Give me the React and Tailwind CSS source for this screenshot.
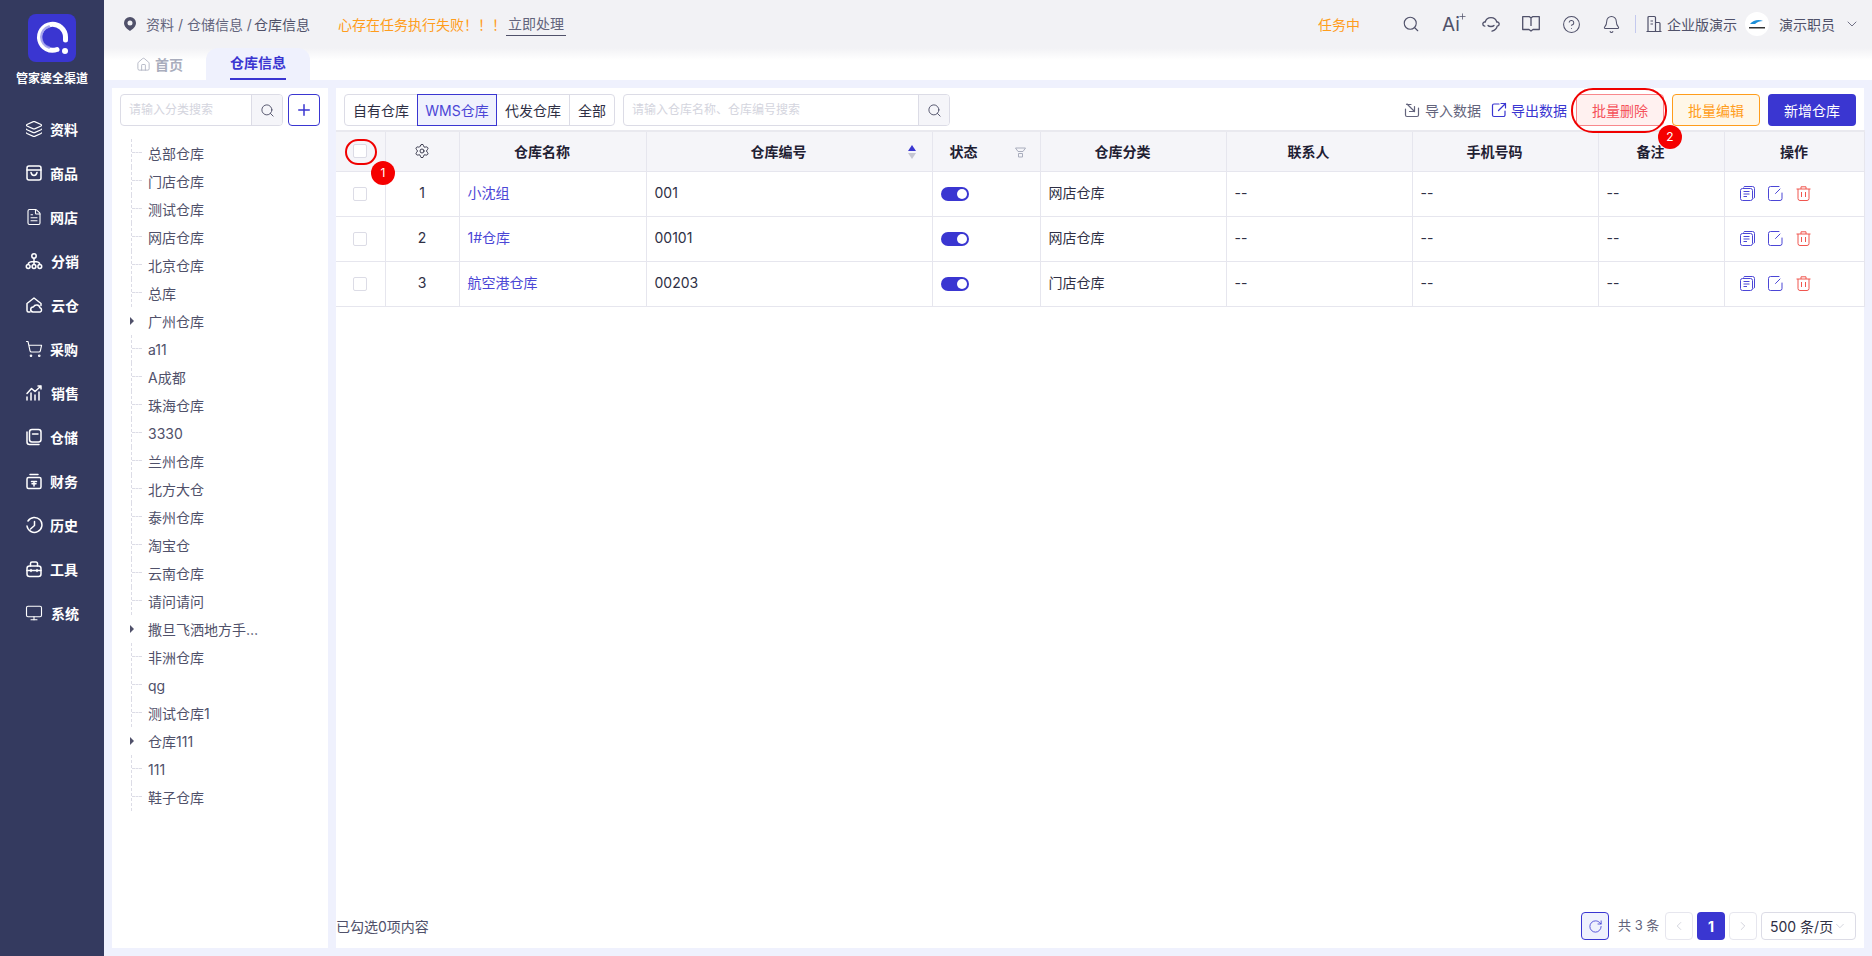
import React from "react";
import { Layers, FileText, ShoppingCart, Search, CircleHelp, Bell, ChevronDown, ChevronLeft, ChevronRight, Settings, RotateCw, Plus, Home, Monitor } from "lucide-react";

const S = (p) => ({ width: 18, height: 18, viewBox: "0 0 18 18", fill: "none", stroke: "currentColor", strokeWidth: 1.5, strokeLinecap: "round", strokeLinejoin: "round", ...p });

const BagI = () => (<svg {...S()}><rect x="2" y="2" width="14" height="14" rx="2" /><path d="M2 6h14M6 8.500c.5 2 1.600 3 3 3s2.500-1 3-3" /></svg>);
const NetI = () => (<svg {...S()}><circle cx="9" cy="4" r="2.200" /><circle cx="3.200" cy="14.500" r="1.900" /><circle cx="9" cy="14.500" r="1.900" /><circle cx="14.800" cy="14.500" r="1.900" /><path d="M9 6.200v6.300M3.200 12.500c0-2.500 2-3 5.800-3s5.800.5 5.800 3" /></svg>);
const CloudI = () => (<svg {...S()}><path d="M5 16H3.500A1.500 1.500 0 0 1 2 14.500V7.500L9 2l7 5.500v2" /><path d="M8 16a2.500 2.500 0 0 1 .4-5 3.500 3.500 0 0 1 6.600.8A2.200 2.200 0 0 1 15 16z" /></svg>);
const ChartI = () => (<svg {...S()}><path d="M2 9.500 6.500 4.500l3.500 3L16 2M13 2h3v3M2 16v-3M6 16V9M10 16v-5M14 16V8" /></svg>);
const StoreI = () => (<svg {...S()}><path d="M2 4v10a2.500 2.500 0 0 0 2.500 2.500H14" /><rect x="4.500" y="1.500" width="11.500" height="12.500" rx="2.500" /><path d="M7.500 6h5.500" /></svg>);
const MoneyI = () => (<svg {...S()}><path d="M5 2.500h8M3.500 5.500h11A1.500 1.500 0 0 1 16 7v8a1.500 1.500 0 0 1-1.500 1.500h-11A1.500 1.500 0 0 1 2 15V7a1.500 1.500 0 0 1 1.500-1.500zM6.500 9.500h5M9 9.500V14M7 11.800h4" /></svg>);
const HistI = () => (<svg {...S()}><path d="M3 5a7.500 7.500 0 1 1-1 5" /><path d="M9.500 5.500v4l-4 3.500" /></svg>);
const ToolI = () => (<svg {...S()}><rect x="2" y="6" width="14" height="10.500" rx="2.500" /><path d="M5.500 6V3.500a1.500 1.500 0 0 1 1.500-1.500h4a1.500 1.500 0 0 1 1.500 1.500V6M2 10.500h14M6 9.500v2M12 9.500v2" /></svg>);
const HeadI = () => (<svg width="18" height="17" viewBox="0 0 18 17" fill="none" stroke="currentColor" strokeWidth="1.300" strokeLinecap="round"><path d="M3.200 6A6 6 0 0 1 14.800 6" /><path d="M3 5.800c-1.500.2-2.200 1.200-2.200 2.200s.7 2 2 2.200M15 5.800c1.500.2 2.200 1.200 2.200 2.200s-.7 2-2 2.200c-.5 2.500-2.500 4.300-5.200 5" /><path d="M6 9.500c1 1.300 4.800 1.300 6 0" /></svg>);
const BookI = () => (<svg width="18" height="16" viewBox="0 0 18 16" fill="none" stroke="currentColor" strokeWidth="1.300" strokeLinejoin="round"><path d="M.7.700h6.800L9 2 10.500.7h6.800V13.500h-6.300L9 15l-2-1.500H.7zM9 2v8" /></svg>);
const BuildI = () => (<svg width="16" height="18" viewBox="0 0 16 18" fill="none" stroke="currentColor" strokeWidth="1.200"><path d="M.5 16.500h15M2 16.500V2.500a1 1 0 0 1 1-1h5.500a1 1 0 0 1 1 1v14M9.500 7.500h3.500a1 1 0 0 1 1 1v8M4.500 6h2.500M4.500 9h2.500" /></svg>);
const ImportI = () => (<svg width="16" height="16" viewBox="0 0 16 16" fill="none" stroke="#63647c" strokeWidth="1.200" strokeLinecap="round" strokeLinejoin="round"><path d="M7 2.500H2.500M1.500 7v6a1.500 1.500 0 0 0 1.500 1.500h10a1.500 1.500 0 0 0 1.500-1.500V6M3 2l7.500 7.500M10.500 4.500v5h-5" /></svg>);
const ExportI = () => (<svg width="16" height="16" viewBox="0 0 16 16" fill="none" stroke="#3a36d1" strokeWidth="1.200" strokeLinecap="round" strokeLinejoin="round"><path d="M8 2H3a1.500 1.500 0 0 0-1.500 1.500V13A1.500 1.500 0 0 0 3 14.500h9.500A1.500 1.500 0 0 0 14 13V9M7.500 8.500 14.500 1.500M10 1.500h4.500V6" /></svg>);
const PinI = () => (<svg width="12" height="14" viewBox="0 0 12 14"><path fillRule="evenodd" fill="#50516a" d="M6 0a6 6 0 0 1 6 6c0 3.400-3.500 6.500-6 8-2.500-1.500-6-4.600-6-8a6 6 0 0 1 6-6zm0 3.500a2.500 2.500 0 1 0 0 5 2.500 2.500 0 0 0 0-5z" /></svg>);
const FilterI = () => (<svg width="11" height="11" viewBox="0 0 11 11" fill="none" stroke="#a9adbd" strokeWidth="1"><path d="M.5 1h10L8 4.500H3zM3 4.500h5M3.500 6.500h4V10h-4z" /></svg>);
const ACopy = () => (<svg width="15" height="15" viewBox="0 0 15 15" fill="none" stroke="#4b46d6" strokeWidth="1"><path d="M3.500 1.500a1.500 1.500 0 0 1 1.500-1h7.500a2 2 0 0 1 2 2V11a1.500 1.500 0 0 1-1 1.500" /><rect x=".5" y="2.500" width="12" height="12" rx="2" /><path d="M3.500 5.500h6M3.500 8h6M3.500 10.500h3.500" /></svg>);
const AEdit = () => (<svg width="15" height="15" viewBox="0 0 15 15" fill="none" stroke="#4b46d6" strokeWidth="1" strokeLinecap="round"><path d="M14 7v5.500a2 2 0 0 1-2 2H2.500a2 2 0 0 1-2-2V2.500a2 2 0 0 1 2-2H11M7.500 7.500 12 3" /></svg>);
const ADel = () => (<svg width="15" height="15" viewBox="0 0 15 15" fill="none" stroke="#f0564f" strokeWidth="1"><path d="M.5 3h14M5 3V.8h5V3M2 3v9.500a2 2 0 0 0 2 2h7a2 2 0 0 0 2-2V3M5.500 6v5M9.500 6v5" /></svg>);

const nav = [
  ["资料", <Layers size={18} strokeWidth={1.5} />, "gap-[7px]"], ["商品", <BagI />, "gap-[7px]"], ["网店", <FileText size={18} strokeWidth={1.5} />, "gap-[7px]"],
  ["分销", <NetI />, "gap-[8px]"], ["云仓", <CloudI />, "gap-[8px]"], ["采购", <ShoppingCart size={18} strokeWidth={1.5} />, "gap-[7px]"], ["销售", <ChartI />, "gap-[8px]"],
  ["仓储", <StoreI />, "gap-[7px]"], ["财务", <MoneyI />, "gap-[7px]"], ["历史", <HistI />, "gap-[7px]"], ["工具", <ToolI />, "gap-[7px]"], ["系统", <Monitor size={18} strokeWidth={1.5} />, "gap-[8px]"],
];
const tree = [
  ["总部仓库"], ["门店仓库"], ["测试仓库"], ["网店仓库"], ["北京仓库"], ["总库"], ["广州仓库", 1], ["a11"], ["A成都"], ["珠海仓库"], ["3330"], ["兰州仓库"],
  ["北方大仓"], ["泰州仓库"], ["淘宝仓"], ["云南仓库"], ["请问请问"], ["撒旦飞洒地方手…", 1], ["非洲仓库"], ["qg"], ["测试仓库1"], ["仓库111", 1], ["111"], ["鞋子仓库"],
];
const rows = [
  ["1", "小沈组", "001", "网店仓库"],
  ["2", "1#仓库", "00101", "网店仓库"],
  ["3", "航空港仓库", "00203", "门店仓库"],
];
const widths = [49, 74, 187, 286, 108, 186, 186, 186, 126, 140];
const th = "border-r border-b border-[#e6e6ee] font-bold text-[#1f2033] text-center p-0 h-[40px]";
const thOff = th + " !pr-[21px]";
const td = "border-r border-b border-[#e6e6ee] p-0 px-2 h-[45px] font-normal text-[#2f3045]";
const tdT = td + " pb-[2px]";

export default function App() {
  return (
    <div className="flex h-screen w-full overflow-hidden text-[14px] text-[#50516a]" style={{ fontFamily: 'Inter, "Noto Sans CJK SC", sans-serif' }}>
      <aside className="w-[104px] shrink-0 bg-[#343a5f] flex flex-col items-center text-white">
        <div className="mt-[14px] w-[48px] h-[48px] rounded-[8px] bg-[#3a36d1]">
          <svg width="48" height="48" viewBox="0 0 48 48" fill="none">
            <path d="M37.500 26V23A13 13 0 1 0 29 35.500" stroke="#ffffff" strokeWidth="5" strokeLinecap="round" />
            <path d="M21 12.500A11 11 0 0 0 21 33.500" stroke="#9492ea" strokeWidth="2.500" strokeLinecap="round" opacity="0.800" />
            <circle cx="37" cy="37" r="3" fill="#fff" />
          </svg>
        </div>
        <div className="mt-[9px] text-[12px] leading-[16px] font-bold whitespace-nowrap">管家婆全渠道</div>
        <nav className="mt-[20px] w-full flex flex-col">
          {nav.map(([t, i, g]) => (
            <div key={t} className={"h-[44px] flex items-center pl-[25px] shrink-0 " + g}>
              {i}
              <span className="font-bold text-[14px]">{t}</span>
            </div>
          ))}
        </nav>
      </aside>
      <div className="flex-1 min-w-0 flex flex-col bg-[#eff1fd]">
        <header className="h-[48px] shrink-0 bg-[#f2f2f5] flex items-center whitespace-nowrap">
          <div className="ml-[20px] mr-[10px]"><PinI /></div>
          <span className="text-[#63647c]">资料 / 仓储信息 / </span>
          <span className="ml-[2px] text-[#50516a]">仓库信息</span>
          <span className="ml-[28px] text-[#ff9d1c]">心存在任务执行失败！！！</span>
          <span className="ml-0 pb-[1px] border-b border-[#50516a] px-[2px] text-[#63647c]">立即处理</span>
          <span className="ml-auto mr-[31px] text-[#ff9d1c]">任务中</span>
          <div className="w-[40px] flex justify-center"><Search size={18} strokeWidth={1.5} /></div>
          <div className="w-[40px] flex justify-center">
            <span className="relative text-[19px] leading-none">Ai<Plus className="absolute right-[-7px] top-[-3px]" size={9} strokeWidth={2} /></span>
          </div>
          <div className="w-[40px] flex justify-center"><HeadI /></div>
          <div className="w-[40px] flex justify-center"><BookI /></div>
          <div className="w-[40px] flex justify-center"><CircleHelp size={19} strokeWidth={1.300} /></div>
          <div className="w-[40px] flex justify-center"><Bell size={19} strokeWidth={1.300} /></div>
          <div className="ml-[4px] w-px h-[18px] bg-[#c4c9ee]" />
          <span className="ml-[10px]"><BuildI /></span>
          <span className="ml-[5px]">企业版演示</span>
          <div className="ml-[8px] w-[24px] h-[24px] rounded-full bg-white flex items-center justify-center">
            <svg width="20" height="12" viewBox="0 0 20 12"><path d="M3 6c3-4 9-5 13-3-3 0-6 1-8 3z" fill="#1d8fd8" /><path d="M2 9h16v1.500H2z" fill="#333" /></svg>
          </div>
          <span className="ml-[10px]">演示职员</span>
          <ChevronDown className="ml-[9px] mr-[12px]" size={16} strokeWidth={1.200} />
        </header>
        <div className="h-[32px] shrink-0 flex bg-[linear-gradient(#f2f2f5,#ffffff_12px)]">
          <div className="ml-[32px] w-[70px] flex items-center gap-[4px] text-[#a9adbd] font-bold">
            <Home size={15} strokeWidth={1.300} /><span>首页</span>
          </div>
          <div className="w-[104px] rounded-t-[12px] bg-[#eff1fd] flex justify-center">
            <span className="h-full leading-[30px] border-b-2 border-[#3a36d1] text-[#3a36d1] font-bold">仓库信息</span>
          </div>
        </div>
        <div className="flex-1 min-h-0 flex gap-[8px] p-[8px]">
          <section className="w-[216px] shrink-0 bg-white flex flex-col">
            <div className="flex mt-[6px] ml-[8px] gap-[5px]">
              <div className="w-[163px] h-[32px] flex border border-[#dcdce6] rounded-[4px] overflow-hidden">
                <div className="flex-1 pl-[8px] text-[12px] leading-[30px] text-[#d4d5de]">请输入分类搜索</div>
                <div className="w-[31px] bg-[#f5f5f9] border-l border-[#dcdce6] flex items-center justify-center"><Search size={15} strokeWidth={1.500} /></div>
              </div>
              <div className="w-[32px] h-[32px] border border-[#3a36d1] rounded-[4px] flex items-center justify-center text-[#3a36d1]"><Plus size={18} strokeWidth={2} /></div>
            </div>
            <div className="mt-[13px] flex flex-col">
              {tree.map(([t, arrow], i) => (
                <div key={i} className="h-[28px] shrink-0 flex items-center pl-[19px]">
                  {arrow ? (
                    <div className="w-[11px] h-full flex items-center"><span className="block ml-[-1px] w-0 h-0 border-y-[4px] border-y-transparent border-l-[4px] border-l-[#50516a]" /></div>
                  ) : (
                    <div className="w-[11px] h-full border-l border-dashed border-[#dcdce6]"><div className="h-[14px] border-b border-dashed border-[#dcdce6]" /></div>
                  )}
                  <span className="ml-[6px] whitespace-nowrap">{t}</span>
                </div>
              ))}
            </div>
          </section>
          <section className="flex-1 min-w-0 bg-white flex flex-col relative">
            <div className="h-[42px] shrink-0 flex items-start pt-[6px] pl-[8px] pr-[8px] whitespace-nowrap">
              <div className="h-[32px] w-[271px] flex border border-[#dcdce6] rounded-[4px] text-[#2f3045]">
                <div className="w-[72px] flex items-center justify-center">自有仓库</div>
                <div className="w-[80px] flex items-center justify-center border border-[#3a36d1] bg-[#eff1fd] text-[#4b46d6] my-[-1px]">WMS仓库</div>
                <div className="w-[73px] flex items-center justify-center border-r border-[#dcdce6]">代发仓库</div>
                <div className="flex-1 flex items-center justify-center">全部</div>
              </div>
              <div className="ml-[8px] h-[32px] w-[327px] flex border border-[#dcdce6] rounded-[4px] overflow-hidden">
                <div className="flex-1 pl-[8px] text-[12px] leading-[30px] text-[#d4d5de]">请输入仓库名称、仓库编号搜索</div>
                <div className="w-[31px] bg-[#f5f5f9] border-l border-[#dcdce6] flex items-center justify-center"><Search size={15} strokeWidth={1.500} /></div>
              </div>
              <div className="ml-auto h-[32px] flex items-center gap-[5px] text-[#63647c]"><ImportI /><span>导入数据</span></div>
              <div className="ml-[10px] h-[32px] flex items-center gap-[4px] text-[#3a36d1]"><ExportI /><span>导出数据</span></div>
              <button className="ml-[9px] w-[88px] h-[32px] rounded-[4px] border border-[#f8888c] bg-[#fff1f0] text-[#f5515b]">批量删除</button>
              <button className="ml-[8px] w-[88px] h-[32px] rounded-[4px] border border-[#ff9d1c] bg-[#fff7e8] text-[#ff9d1c]">批量编辑</button>
              <button className="ml-[8px] w-[88px] h-[32px] rounded-[4px] bg-[#3a36d1] text-white">新增仓库</button>
            </div>
            <table className="table-fixed border-collapse w-full border-t-2 border-[#e9e9ef] shrink-0">
              <colgroup>{widths.map((w, i) => <col key={i} style={{ width: w }} />)}</colgroup>
              <thead className="bg-[#f5f5f9]">
                <tr>
                  <th className={th}><span className="block mx-auto w-[14px] h-[14px] border border-[#dcdce6] bg-white rounded-[2px]" /></th>
                  <th className={th}><Settings className="mx-auto text-[#2f3045]" size={16} strokeWidth={1.400} /></th>
                  <th className={thOff}>仓库名称</th>
                  <th className={thOff + " relative"}>
                    仓库编号
                    <span className="absolute right-[16px] top-[13px] flex flex-col gap-[2px]">
                      <span className="w-0 h-0 border-x-[4px] border-x-transparent border-b-[6px] border-b-[#3a36d1]" />
                      <span className="w-0 h-0 border-x-[4px] border-x-transparent border-t-[6px] border-t-[#c5c6d2]" />
                    </span>
                  </th>
                  <th className={th + " relative !text-left !pl-[17px]"}>
                    状态<span className="absolute right-[14px] top-[15px]"><FilterI /></span>
                  </th>
                  <th className={thOff}>仓库分类</th>
                  <th className={thOff}>联系人</th>
                  <th className={thOff}>手机号码</th>
                  <th className={thOff}>备注</th>
                  <th className={th}>操作</th>
                </tr>
              </thead>
              <tbody>
                {rows.map((r) => (
                  <tr key={r[0]}>
                    <td className={td}><span className="block mx-auto w-[14px] h-[14px] border border-[#dcdce6] rounded-[2px]" /></td>
                    <td className={tdT + " text-center"}>{r[0]}</td>
                    <td className={tdT + " !text-[#4b46d6]"}>{r[1]}</td>
                    <td className={tdT}>{r[2]}</td>
                    <td className={td}>
                      <div className="w-[28px] h-[14px] rounded-full bg-[#3a36d1] flex items-center justify-end pr-[2px]"><span className="block w-[10px] h-[10px] rounded-full bg-white" /></div>
                    </td>
                    <td className={tdT}>{r[3]}</td>
                    <td className={tdT}>--</td>
                    <td className={tdT}>--</td>
                    <td className={tdT}>--</td>
                    <td className={td}>
                      <div className="flex items-center gap-[13px] pl-[7px]"><ACopy /><AEdit /><ADel /></div>
                    </td>
                  </tr>
                ))}
              </tbody>
            </table>
            <div className="mt-auto mb-[8px] h-[28px] flex items-center pr-[8px] text-[#50516a]">
              <span>已勾选0项内容</span>
              <div className="ml-auto w-[28px] h-[28px] rounded-[4px] border border-[#3a36d1] bg-[#eff1fd] flex items-center justify-center text-[#3a36d1]"><RotateCw size={15} strokeWidth={1.300} /></div>
              <span className="ml-[9px] w-[42px] text-[13px] text-[#63647c] whitespace-nowrap">共 3 条</span>
              <div className="ml-[5px] w-[28px] h-[28px] rounded-[4px] border border-[#e6e6ee] flex items-center justify-center text-[#c5c6d2]"><ChevronLeft size={14} strokeWidth={1.300} /></div>
              <div className="ml-[4px] w-[28px] h-[28px] rounded-[4px] bg-[#3a36d1] flex items-center justify-center text-white font-bold">1</div>
              <div className="ml-[4px] w-[28px] h-[28px] rounded-[4px] border border-[#e6e6ee] flex items-center justify-center text-[#c5c6d2]"><ChevronRight size={14} strokeWidth={1.300} /></div>
              <div className="ml-[4px] w-[95px] h-[28px] rounded-[4px] border border-[#dcdce6] flex items-center justify-between px-[8px] text-[#2f3045] whitespace-nowrap">500 条/页<ChevronDown className="text-[#c5c6d2]" size={14} strokeWidth={1.300} /></div>
            </div>
            {/* annotations */}
            <div className="absolute left-[9px] top-[51px] w-[32px] h-[26px] rounded-[13px] border-2 border-[#f00000]" />
            <div className="absolute left-[35px] top-[73px] w-[24px] h-[24px] rounded-full bg-[#f50000] text-white text-[12px] flex items-center justify-center">1</div>
            <div className="absolute left-[1235px] top-0 w-[96px] h-[45px] rounded-[22px] border-2 border-[#f00000]" />
            <div className="absolute left-[1322px] top-[37px] w-[24px] h-[24px] rounded-full bg-[#f50000] text-white text-[12px] flex items-center justify-center">2</div>
          </section>
        </div>
      </div>
    </div>
  );
}
